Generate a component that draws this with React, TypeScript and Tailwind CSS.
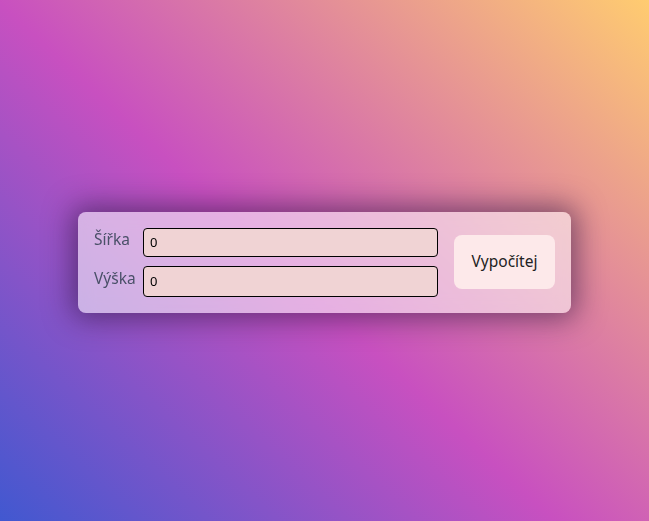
import React, { useState } from "react";

const App = () => {
  const [width, setWidth] = useState("0");
  const [height, setHeight] = useState("0");

  return (
    <div className="min-h-screen w-full flex items-center justify-center pt-[3px] bg-[linear-gradient(43deg,#4158D0_0%,#C850C0_46%,#FFCC70_100%)] font-['Noto_Sans',sans-serif]">
      <div className="w-[493px] h-[101px] flex items-center gap-4 p-4 rounded-lg bg-white/55 backdrop-blur-sm shadow-[0_0_28px_6px_rgba(40,20,60,0.55)]">
        <div className="flex-1 grid grid-cols-[40px_1fr] items-center gap-x-[9px] gap-y-[9px]">
          <label className="text-[15.5px] leading-none text-[#4a5068] -mt-[4px] whitespace-nowrap">Šířka</label>
          <input
            value={width}
            onChange={(e) => setWidth(e.target.value)}
            className="h-[29px] w-full rounded border border-black bg-[#f0d3d4] px-[6px] text-[13px] text-black outline-none"
          />
          <label className="text-[15.5px] leading-none text-[#4a5068] -mt-[4px] whitespace-nowrap">Výška</label>
          <input
            value={height}
            onChange={(e) => setHeight(e.target.value)}
            className="h-[31px] w-full rounded border border-black bg-[#f0d3d4] px-[6px] text-[13px] text-black outline-none"
          />
        </div>
        <button className="w-[101px] h-[54px] rounded-lg bg-[#fde9ea] text-[15.5px] text-[#222] cursor-pointer">
          Vypočítej
        </button>
      </div>
    </div>
  );
};

export default App;
